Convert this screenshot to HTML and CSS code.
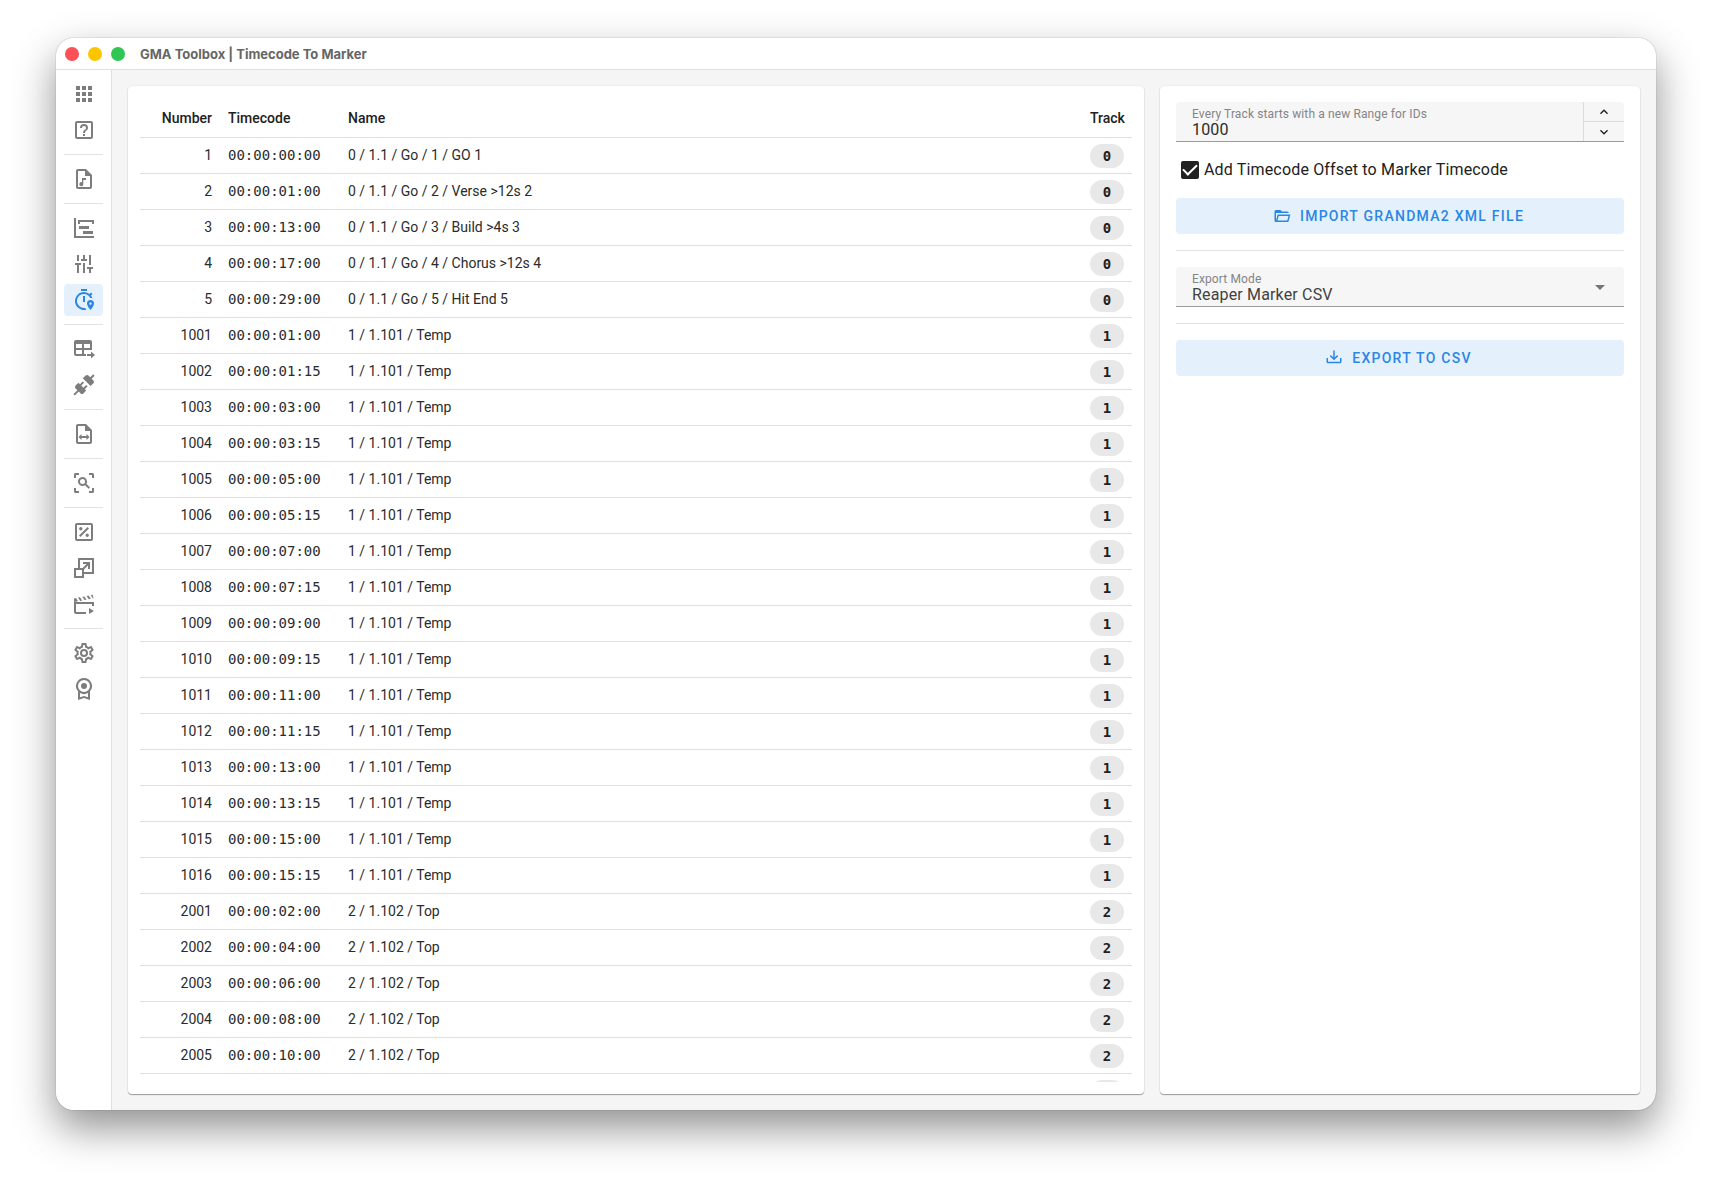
FILE: index.html
```html
<!DOCTYPE html>
<html lang="en">
<head>
    <meta charset="UTF-8">
    <meta name="viewport" content="width=device-width, initial-scale=1.0">
    <title>GMA Toolbox | Timecode To Marker</title>
    <link rel="stylesheet" href="styles.css">
</head>
<body>
    <div class="window">
        <header class="titlebar">
            <span class="dot red"></span>
            <span class="dot yellow"></span>
            <span class="dot green"></span>
            <h1 class="title">GMA Toolbox | Timecode To Marker</h1>
        </header>
        <div class="content">
            <nav class="sidebar">
                <a href="#" class="nav-item" aria-label="Apps">
                    <svg viewBox="0 0 24 24"><path d="M16,20H20V16H16M16,14H20V10H16M10,8H14V4H10M16,8H20V4H16M10,14H14V10H10M4,14H8V10H4M4,20H8V16H4M10,20H14V16H10M4,8H8V4H4V8Z"/></svg>
                </a>
                <a href="#" class="nav-item" aria-label="Help">
                    <svg viewBox="0 0 24 24"><path d="M11,18H13V16H11V18M12,6A4,4 0 0,0 8,10H10A2,2 0 0,1 12,8A2,2 0 0,1 14,10C14,12 11,11.75 11,15H13C13,12.75 16,12.5 16,10A4,4 0 0,0 12,6M5,3H19A2,2 0 0,1 21,5V19A2,2 0 0,1 19,21H5A2,2 0 0,1 3,19V5A2,2 0 0,1 5,3M5,5V19H19V5H5Z"/></svg>
                </a>
                <hr>
                <a href="#" class="nav-item" aria-label="Audio file">
                    <svg viewBox="0 0 24 24"><path d="M14 2H6C4.9 2 4 2.9 4 4V20C4 21.1 4.9 22 6 22H18C19.1 22 20 21.1 20 20V8L14 2M18 20H6V4H13V9H18V20M10 11V15.3A2 2 0 1 0 11.3 17.2V13H14V11H10Z"/></svg>
                </a>
                <hr>
                <a href="#" class="nav-item" aria-label="Timeline">
                    <svg viewBox="0 0 24 24"><path d="M2,2H4V20H22V22H2V2M7,10H17V13H7V10M11,15H21V18H11V15M6,4H22V8H20V6H8V8H6V4Z"/></svg>
                </a>
                <a href="#" class="nav-item" aria-label="Faders">
                    <svg viewBox="0 0 24 24"><path d="M5 3H7V9H5V3M3 11H9V13H7V21H5V13H3V11M11 3H13V7H15V9H9V7H11V3M11 11H13V21H11V11M17 3H19V13H17V3M15 15H21V17H19V21H17V17H15V15Z"/></svg>
                </a>
                <a href="#" class="nav-item active" aria-label="Timecode To Marker">
                    <svg viewBox="0 0 24 24"><path d="M9 1H15V3H9V1M11 8H13V14H11V8M13.2 19.9C12.8 20 12.4 20 12 20A7 7 0 1 1 18.3 10C19 10 19.8 10.1 20.5 10.4A9 9 0 0 0 19 7.4L20.5 6L19 4.5L17.6 6A9 9 0 1 0 14.4 21.7L13.2 19.9M18.5 12A3.5 3.5 0 0 0 15 15.5C15 18.1 18.5 22 18.5 22S22 18.1 22 15.5A3.5 3.5 0 0 0 18.5 12M18.5 16.8A1.2 1.2 0 1 1 18.5 14.4A1.2 1.2 0 0 1 18.5 16.8Z"/></svg>
                </a>
                <hr>
                <a href="#" class="nav-item" aria-label="Table export">
                    <svg viewBox="0 0 24 24"><path d="M4 3H18A2 2 0 0 1 20 5V13H18V13H12V17H14V19H4A2 2 0 0 1 2 17V5A2 2 0 0 1 4 3M4 7V11H10V7H4M12 7V11H18V7H12M4 13V17H10V13H4M15 17H19V14.5L23 18L19 21.5V19H15V17Z"/></svg>
                </a>
                <a href="#" class="nav-item" aria-label="Connection">
                    <svg viewBox="0 0 24 24"><path d="M21.4 7.5C22.2 8.3 22.2 9.6 21.4 10.3L18.6 13.1L10.8 5.3L13.6 2.5C14.4 1.7 15.7 1.7 16.4 2.5L18.2 4.3L21.2 1.3L22.6 2.7L19.6 5.7L21.4 7.5M15.6 13.3L14.2 11.9L11.4 14.7L9.3 12.6L12.1 9.8L10.7 8.4L7.9 11.2L6.4 9.8L3.6 12.6C2.8 13.4 2.8 14.7 3.6 15.4L5.4 17.2L1.4 21.2L2.8 22.6L6.8 18.6L8.6 20.4C9.4 21.2 10.7 21.2 11.4 20.4L14.2 17.6L12.8 16.2L15.6 13.3Z"/></svg>
                </a>
                <hr>
                <a href="#" class="nav-item" aria-label="Convert file">
                    <svg viewBox="0 0 24 24"><path d="M14 2H6C4.9 2 4 2.9 4 4V20C4 21.1 4.9 22 6 22H18C19.1 22 20 21.1 20 20V8L14 2M18 20H6V4H13V9H18V20M9.5 12V14H14.5V12L17.5 15L14.5 18V16H9.5V18L6.5 15L9.5 12Z"/></svg>
                </a>
                <hr>
                <a href="#" class="nav-item" aria-label="Scan">
                    <svg viewBox="0 0 24 24"><path d="M17 22V20H20V17H22V20.5A1.5 1.5 0 0 1 20.5 22H17M7 22H3.5A1.5 1.5 0 0 1 2 20.5V17H4V20H7V22M17 2H20.5A1.5 1.5 0 0 1 22 3.5V7H20V4H17V2M7 2V4H4V7H2V3.5A1.5 1.5 0 0 1 3.5 2H7M10.5 6A4.5 4.5 0 0 1 14.4 12.8L18 16.4L16.6 17.8L13 14.2A4.5 4.5 0 1 1 10.5 6M10.5 8A2.5 2.5 0 1 0 10.5 13A2.5 2.5 0 0 0 10.5 8Z"/></svg>
                </a>
                <hr>
                <a href="#" class="nav-item" aria-label="Percent">
                    <svg viewBox="0 0 24 24"><path d="M5 3H19A2 2 0 0 1 21 5V19A2 2 0 0 1 19 21H5A2 2 0 0 1 3 19V5A2 2 0 0 1 5 3M5 5V19H19V5H5M15.6 7L17 8.4L8.4 17L7 15.6L15.6 7M8.8 7.1A1.7 1.7 0 1 1 8.8 10.5A1.7 1.7 0 0 1 8.8 7.1M15.2 13.5A1.7 1.7 0 1 1 15.2 16.9A1.7 1.7 0 0 1 15.2 13.5Z"/></svg>
                </a>
                <a href="#" class="nav-item" aria-label="Resize">
                    <svg viewBox="0 0 24 24"><path d="M10.59,12L14.59,8H11V6H18V13H16V9.41L12,13.41V16H20V4H8V12H10.59M22,2V18H12V22H2V12H6V2H22M10,14H4V20H10V14Z"/></svg>
                </a>
                <a href="#" class="nav-item" aria-label="Movie">
                    <svg viewBox="0 0 24 24"><path d="M2 6.5L4 6L6 9.3L2 10V6.5M6 5.6L8 5.2L10.2 8.5L8.2 8.9L6 5.6M10.3 4.8L12.3 4.4L14.5 7.7L12.5 8.1L10.3 4.8M14.6 4L16.6 3.6L18.8 6.8L16.8 7.2L14.6 4M18.8 3.1L20.7 2.7L21.5 6.3L20.8 6.5L18.8 3.1M2 10H22V14H20V12H4V20H14V22H4A2 2 0 0 1 2 20V10M17 16L22 19L17 22V16Z"/></svg>
                </a>
                <hr>
                <a href="#" class="nav-item" aria-label="Settings">
                    <svg viewBox="0 0 24 24"><path d="M12,8A4,4 0 0,1 16,12A4,4 0 0,1 12,16A4,4 0 0,1 8,12A4,4 0 0,1 12,8M12,10A2,2 0 0,0 10,12A2,2 0 0,0 12,14A2,2 0 0,0 14,12A2,2 0 0,0 12,10M10,22C9.75,22 9.54,21.82 9.5,21.58L9.13,18.93C8.5,18.68 7.96,18.34 7.44,17.94L4.95,18.95C4.73,19.03 4.46,18.95 4.34,18.73L2.34,15.27C2.21,15.05 2.27,14.78 2.46,14.63L4.57,12.97L4.5,12L4.57,11L2.46,9.37C2.27,9.22 2.21,8.95 2.34,8.73L4.34,5.27C4.46,5.05 4.73,4.96 4.95,5.05L7.44,6.05C7.96,5.66 8.5,5.32 9.13,5.07L9.5,2.42C9.54,2.18 9.75,2 10,2H14C14.25,2 14.46,2.18 14.5,2.42L14.87,5.07C15.5,5.32 16.04,5.66 16.56,6.05L19.05,5.05C19.27,4.96 19.54,5.05 19.66,5.27L21.66,8.73C21.79,8.95 21.73,9.22 21.54,9.37L19.43,11L19.5,12L19.43,13L21.54,14.63C21.73,14.78 21.79,15.05 21.66,15.27L19.66,18.73C19.54,18.95 19.27,19.04 19.05,18.95L16.56,17.95C16.04,18.34 15.5,18.68 14.87,18.93L14.5,21.58C14.46,21.82 14.25,22 14,22H10M11.25,4L10.88,6.61C9.68,6.86 8.62,7.5 7.85,8.39L5.44,7.35L4.69,8.65L6.8,10.2C6.4,11.37 6.4,12.64 6.8,13.8L4.68,15.36L5.43,16.66L7.86,15.62C8.63,16.5 9.68,17.14 10.87,17.38L11.24,20H12.76L13.13,17.39C14.32,17.14 15.37,16.5 16.14,15.62L18.57,16.66L19.32,15.36L17.2,13.81C17.6,12.64 17.6,11.37 17.2,10.2L19.31,8.65L18.56,7.35L16.15,8.39C15.38,7.5 14.32,6.86 13.12,6.62L12.75,4H11.25Z"/></svg>
                </a>
                <a href="#" class="nav-item" aria-label="License">
                    <svg viewBox="0 0 24 24"><path d="M12 1A8 8 0 0 1 18 14.3V23L12 21L6 23V14.3A8 8 0 0 1 12 1M12 3A6 6 0 1 0 12 15A6 6 0 0 0 12 3M8 16V20.2L12 18.9L16 20.2V16A8 8 0 0 1 8 16M12 6A3 3 0 1 1 12 12A3 3 0 0 1 12 6Z"/></svg>
                </a>
            </nav>
            <main class="main">
                <section class="card markers">
                    <div class="table-wrap">
                        <table>
                            <thead>
                                <tr>
                                    <th class="number">Number</th>
                                    <th class="timecode">Timecode</th>
                                    <th>Name</th>
                                    <th class="track">Track</th>
                                </tr>
                            </thead>
                            <tbody id="marker-rows"></tbody>
                        </table>
                    </div>
                </section>
                <section class="card options">
                    <div class="field number-field">
                        <div class="field-body">
                            <label for="range">Every Track starts with a new Range for IDs</label>
                            <input type="number" id="range" value="1000">
                        </div>
                        <div class="spinner">
                            <button type="button" aria-label="Increase"><svg viewBox="0 0 24 24"><path d="M7.41,15.41L12,10.83L16.59,15.41L18,14L12,8L6,14L7.41,15.41Z"/></svg></button>
                            <button type="button" aria-label="Decrease"><svg viewBox="0 0 24 24"><path d="M7.41,8.58L12,13.17L16.59,8.58L18,10L12,16L6,10L7.41,8.58Z"/></svg></button>
                        </div>
                    </div>
                    <div class="check">
                        <input type="checkbox" id="offset" checked>
                        <label for="offset">Add Timecode Offset to Marker Timecode</label>
                    </div>
                    <button type="button" class="btn">
                        <svg viewBox="0 0 24 24"><path d="M6.1,10L4,18V8H21A2,2 0 0,0 19,6H12L10,4H4A2,2 0 0,0 2,6V18A2,2 0 0,0 4,20H19C19.9,20 20.7,19.4 20.9,18.5L23.2,10H6.1M19,18H6L7.6,12H20.6L19,18Z"/></svg>
                        Import grandMA2 XML File
                    </button>
                    <hr>
                    <div class="field select-field">
                        <div class="field-body">
                            <label for="mode">Export Mode</label>
                            <select id="mode">
                                <option>Reaper Marker CSV</option>
                            </select>
                        </div>
                    </div>
                    <hr>
                    <button type="button" class="btn">
                        <svg viewBox="0 0 24 24"><path d="M2 12H4V17H20V12H22V17C22 18.11 21.11 19 20 19H4C2.9 19 2 18.11 2 17V12M12 15L17.55 9.54L16.13 8.13L13 11.25V2H11V11.25L7.88 8.13L6.46 9.55L12 15Z"/></svg>
                        Export to CSV
                    </button>
                </section>
            </main>
        </div>
    </div>
    <script>
        const tracks = [
            {
                track: 0,
                names: ["Go / 1 / GO 1", "Go / 2 / Verse >12s 2", "Go / 3 / Build >4s 3", "Go / 4 / Chorus >12s 4", "Go / 5 / Hit End 5"],
                seq: "1.1",
                times: ["00:00", "01:00", "13:00", "17:00", "29:00"]
            },
            {
                track: 1,
                names: ["Temp"],
                seq: "1.101",
                times: ["01:00", "01:15", "03:00", "03:15", "05:00", "05:15", "07:00", "07:15", "09:00", "09:15", "11:00", "11:15", "13:00", "13:15", "15:00", "15:15"]
            },
            {
                track: 2,
                names: ["Top"],
                seq: "1.102",
                times: ["02:00", "04:00", "06:00", "08:00", "10:00", "12:00"]
            }
        ];
        const body = document.getElementById("marker-rows");
        tracks.forEach((t)=>{
            t.times.forEach((time,i)=>{
                const row = body.insertRow();
                const name = t.names[i] || t.names[0];
                row.insertCell().innerText = t.track*1000 + i + 1;
                row.insertCell().innerText = "00:00:" + time;
                row.insertCell().innerText = t.track + " / " + t.seq + " / " + name;
                row.insertCell().innerHTML = "<span class='chip'>" + t.track + "</span>";
                row.cells[0].className = "number";
                row.cells[1].className = "timecode";
                row.cells[3].className = "track";
            });
        });
    </script>
</body>
</html>
```
FILE: styles.css
```css
* {
    box-sizing: border-box;
}

body {
    font-family: Roboto, sans-serif;
    font-size: 14px;
    color: #212121;
    background: #fff;
    margin: 0;
    padding: 38px 56px 74px;
    height: 100vh;
}

hr {
    width: 100%;
    height: 1px;
    border: none;
    background: #e3e3e3;
    margin: 0;
}

svg {
    display: block;
    fill: currentColor;
}

.window {
    display: flex;
    flex-direction: column;
    height: 100%;
    border-radius: 18px;
    overflow: hidden;
    background: #f5f5f5;
    box-shadow: 0 0 1px rgba(0, 0, 0, 0.6), 0 18px 42px rgba(0, 0, 0, 0.44);
}

/* title bar */
.titlebar {
    display: flex;
    align-items: center;
    gap: 9px;
    height: 32px;
    padding: 0 9px;
    flex-shrink: 0;
    background: #fff;
    border-bottom: 1px solid #e0e0e0;
}

.dot {
    width: 14px;
    height: 14px;
    border-radius: 50%;
}

.red {
    background: #fc5058;
}

.yellow {
    background: #fdc500;
}

.green {
    background: #2fc653;
}

.title {
    font-family: Inter, sans-serif;
    font-size: 13px;
    font-weight: 700;
    color: #666;
    margin: 0 6px;
}

.content {
    display: flex;
    flex: 1;
    min-height: 0;
}

/* sidebar */
.sidebar {
    display: flex;
    flex-direction: column;
    gap: 4px;
    width: 56px;
    flex-shrink: 0;
    padding: 8px;
    background: #fff;
    border-right: 1px solid #e0e0e0;
}

.sidebar hr {
    margin: 4px 0;
}

.nav-item {
    display: flex;
    align-items: center;
    justify-content: center;
    height: 32px;
    border-radius: 4px;
    color: #7d7d7d;
}

.nav-item svg {
    width: 24px;
    height: 24px;
}

.nav-item.active {
    background: #e4f1fc;
    color: #2b87e3;
}

.main {
    display: flex;
    flex: 1;
    gap: 16px;
    min-width: 0;
    padding: 16px;
}

.card {
    background: #fff;
    border-radius: 4px;
    box-shadow: 0 1px 1px rgba(0, 0, 0, 0.35), 0 0 2px rgba(0, 0, 0, 0.1);
}

/* marker table */
.markers {
    flex: 1;
    min-width: 0;
    padding: 12px;
}

.table-wrap {
    height: 100%;
    overflow: auto;
    scrollbar-width: none;
}

table {
    width: 100%;
    table-layout: fixed;
    border-collapse: separate;
    border-spacing: 0;
}

th, td {
    height: 36px;
    padding: 0 8px;
    text-align: left;
    white-space: nowrap;
    border-bottom: 1px solid #e0e0e0;
}

th {
    height: 40px;
    font-weight: 500;
}

td {
    padding-bottom: 2px;
    color: #2b2b2b;
}

.number {
    width: 80px;
    text-align: right;
}

.timecode {
    width: 120px;
}

td.timecode {
    font-family: "DejaVu Sans Mono", monospace;
}

.track {
    width: 50px;
    text-align: center;
}

td.track {
    padding-bottom: 0;
}

.chip {
    display: flex;
    align-items: center;
    justify-content: center;
    height: 24px;
    border-radius: 12px;
    background: #e8e8e8;
    color: #212121;
    font-family: "DejaVu Sans Mono", monospace;
    font-weight: 700;
}

/* options */
.options {
    display: flex;
    flex-direction: column;
    width: 480px;
    flex-shrink: 0;
    padding: 16px;
}

.options hr {
    margin: 16px 0;
}

.field {
    display: flex;
    height: 40px;
    background: #f6f6f6;
    border-bottom: 1px solid #9a9a9a;
    border-radius: 4px 4px 0 0;
}

.field-body {
    display: flex;
    flex-direction: column;
    flex: 1;
    padding: 5px 0 2px;
}

.field label {
    font-size: 12px;
    line-height: 14px;
    letter-spacing: 0.01em;
    padding: 0 16px;
    color: #858585;
}

.field input, .field select {
    width: 100%;
    height: 18px;
    margin: 0;
    padding: 0 16px;
    border: none;
    outline: none;
    background: none;
    font-family: Roboto, sans-serif;
    font-size: 16px;
    line-height: 18px;
    letter-spacing: 0.01em;
    color: #2b2b2b;
    appearance: none;
}

.field input::-webkit-inner-spin-button {
    display: none;
}

.field select {
    color: #424242;
}

.select-field {
    position: relative;
}

.select-field::after {
    content: "";
    position: absolute;
    right: 19px;
    top: 18px;
    border: 5px solid transparent;
    border-top-color: #757575;
    border-bottom: none;
    pointer-events: none;
}

.spinner {
    display: flex;
    flex-direction: column;
    width: 41px;
    border-left: 1px solid #dcdcdc;
}

.spinner button {
    display: flex;
    align-items: center;
    justify-content: center;
    flex: 1;
    padding: 0;
    border: none;
    background: none;
    color: #212121;
}

.spinner button + button {
    border-top: 1px solid #dcdcdc;
}

.spinner svg {
    width: 16px;
    height: 16px;
}

.check {
    display: flex;
    align-items: center;
    gap: 5px;
    height: 56px;
    padding-left: 5px;
    font-size: 16px;
    letter-spacing: 0.01em;
}

.check label {
    padding-bottom: 2px;
}

.check input {
    display: grid;
    place-items: center;
    appearance: none;
    width: 18px;
    height: 18px;
    margin: 0;
    border-radius: 2px;
    background: #212121;
}

/* tick */
.check input:checked::before {
    content: "";
    width: 12px;
    height: 6px;
    margin-bottom: 4px;
    border-left: 2px solid #fff;
    border-bottom: 2px solid #fff;
    transform: rotate(-45deg);
}

.btn {
    display: flex;
    align-items: center;
    justify-content: center;
    gap: 9px;
    height: 36px;
    padding: 0 19px 0 16px;
    border: none;
    border-radius: 4px;
    background: #e4f1fc;
    color: #2b87e3;
    font-family: Roboto, sans-serif;
    font-size: 14px;
    font-weight: 500;
    letter-spacing: 0.09em;
    text-transform: uppercase;
    cursor: pointer;
}

.btn svg {
    width: 18px;
    height: 18px;
}
```
